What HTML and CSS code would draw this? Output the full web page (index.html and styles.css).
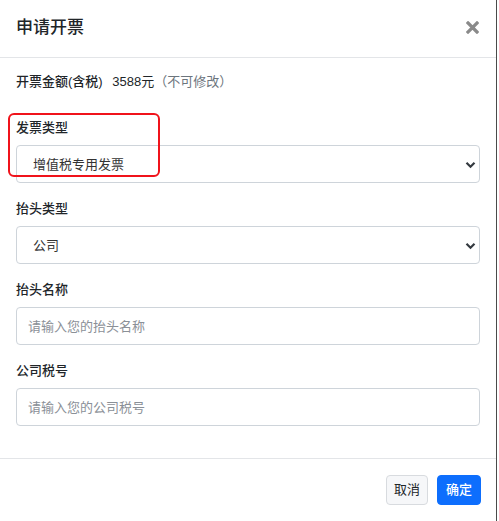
FILE: index.html
```html
<!DOCTYPE html>
<html lang="zh-CN">
<head>
<meta charset="utf-8">
<title>申请开票</title>
<link rel="stylesheet" href="styles.css">
</head>
<body>
<div class="modal">
  <div class="modal-header">
    <h5 class="modal-title">申请开票</h5>
    <button class="btn-close" type="button" aria-label="关闭">
      <svg width="13" height="13" viewBox="0 0 13 13"><path d="M2 2 L11 11 M11 2 L2 11" stroke="#8a8a8a" stroke-width="3.2" stroke-linecap="square"/></svg>
    </button>
  </div>
  <div class="modal-body">
    <div class="amount-row">
      <span class="amount-label">开票金额(含税)</span>
      <span class="amount-value">3588元</span><span class="amount-note">（不可修改）</span>
    </div>
    <div class="form-group highlight-group">
      <div class="highlight-box"></div>
      <label class="form-label">发票类型</label>
      <div class="select-wrap">
        <select class="form-select"><option>增值税专用发票</option></select>
        <svg class="chevron" width="11" height="8" viewBox="0 0 11 8"><path d="M1.5 1.8 L5.5 5.8 L9.5 1.8" fill="none" stroke="#343a40" stroke-width="2.2"/></svg>
      </div>
    </div>
    <div class="form-group">
      <label class="form-label">抬头类型</label>
      <div class="select-wrap">
        <select class="form-select"><option>公司</option></select>
        <svg class="chevron" width="11" height="8" viewBox="0 0 11 8"><path d="M1.5 1.8 L5.5 5.8 L9.5 1.8" fill="none" stroke="#343a40" stroke-width="2.2"/></svg>
      </div>
    </div>
    <div class="form-group">
      <label class="form-label">抬头名称</label>
      <input class="form-control" type="text" placeholder="请输入您的抬头名称">
    </div>
    <div class="form-group">
      <label class="form-label">公司税号</label>
      <input class="form-control" type="text" placeholder="请输入您的公司税号">
    </div>
  </div>
  <div class="modal-footer">
    <button class="btn btn-light" type="button">取消</button>
    <button class="btn btn-primary" type="button">确定</button>
  </div>
</div>
</body>
</html>
```
FILE: styles.css
```css
* { box-sizing: border-box; }
html, body { margin: 0; padding: 0; background: #ffffff; }
body {
  font-family: "Liberation Sans", "Noto Sans CJK SC", sans-serif;
  color: #212529;
  font-size: 13px;
}
.modal {
  width: 497px;
  height: 521px;
  background: #fff;
  border-right: 1px solid #4a4a4a;
  display: flex;
  flex-direction: column;
}
.modal-header {
  height: 58px;
  border-bottom: 1px solid #e3e5e8;
  display: flex;
  align-items: center;
  justify-content: space-between;
  padding: 0 16px 2px 16px;
}
.modal-title {
  margin: 0;
  font-size: 17px;
  font-weight: 500;
  line-height: 22px;
  color: #212529;
}
.btn-close {
  border: 0;
  background: transparent;
  padding: 0;
  width: 13px;
  height: 13px;
  display: flex;
  margin-right: 1px;
}
.modal-body {
  padding: 15px 16px 16px 16px;
  position: relative;
}
.amount-row {
  line-height: 18px;
  margin-bottom: 27px;
  font-size: 13px;
}
.amount-label { font-weight: 500; color: #212529; }
.amount-value { margin-left: 6px; color: #212529; }
.amount-note { color: #6c757d; }
.form-group { margin-bottom: 16px; }
.highlight-group { position: relative; }
.highlight-box {
  position: absolute;
  left: -8px;
  top: -5px;
  width: 152px;
  height: 64px;
  border: 2px solid #f0131b;
  border-radius: 6px;
  pointer-events: none;
  z-index: 2;
}
.form-label {
  display: block;
  line-height: 20px;
  margin-bottom: 7px;
  font-size: 13px;
  font-weight: 500;
}
.select-wrap { position: relative; }
.form-select,
.form-control {
  display: block;
  width: 100%;
  height: 38px;
  border: 1px solid #ced4da;
  border-radius: 4px;
  background: #fff;
  font-family: inherit;
  font-size: 13px;
  color: #333;
  margin: 0;
}
.form-select {
  appearance: none;
  -webkit-appearance: none;
  padding: 0 30px 0 16px;
}
.form-control { padding: 0 11px; }
.form-control::placeholder { color: #8b9097; }
.chevron {
  position: absolute;
  right: 4px;
  top: 16px;
  pointer-events: none;
}
.modal-footer {
  margin-top: auto;
  border-top: 1px solid #e3e5e8;
  padding: 16px 15px 16px 16px;
  display: flex;
  justify-content: flex-end;
  gap: 9px;
}
.btn {
  height: 30px;
  padding: 0 7px;
  border-radius: 4px;
  font-family: inherit;
  font-size: 13px;
  line-height: 28px;
}
.btn-light {
  background: #f6f7f9;
  border: 1px solid #d8dbdf;
  color: #212529;
}
.btn-primary {
  background: #0d6efd;
  border: 1px solid #0d6efd;
  color: #fff;
  font-weight: 500;
  width: 44px;
}
```
